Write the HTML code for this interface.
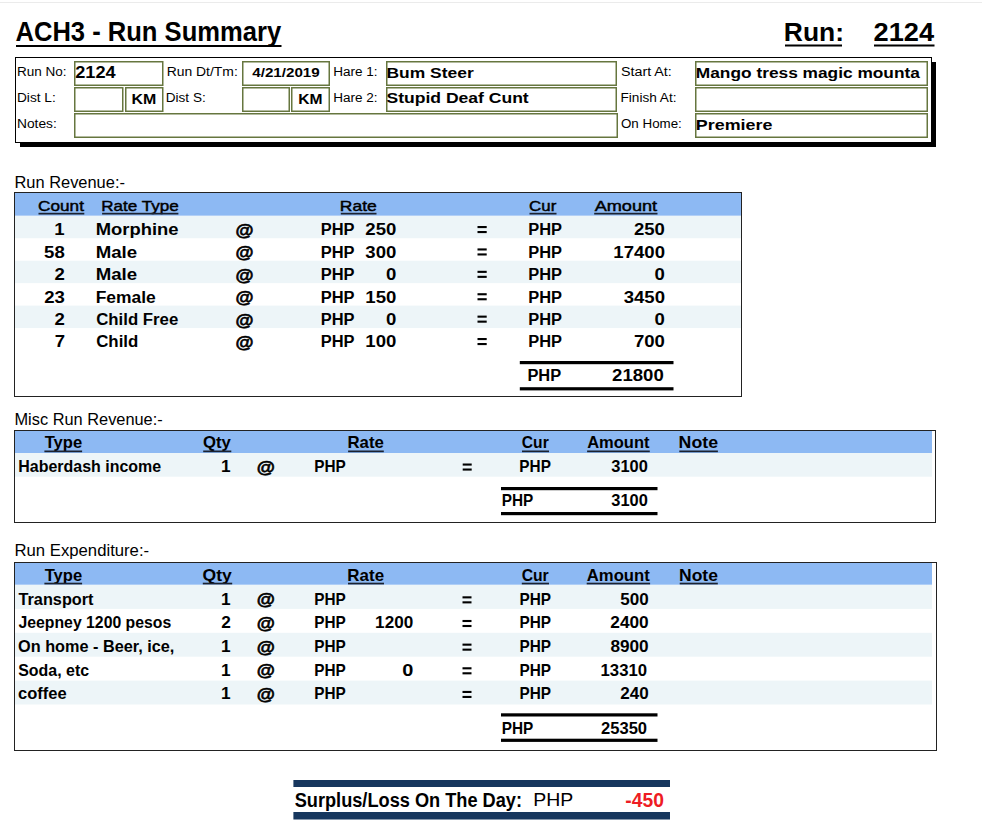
<!DOCTYPE html>
<html><head><meta charset="utf-8"><style>
html,body{margin:0;padding:0;background:#fff;}
svg{display:block;font-family:"Liberation Sans",sans-serif;}
</style></head><body>
<svg width="982" height="829" viewBox="0 0 982 829">
<rect x="0" y="0" width="982" height="829" fill="#fff"/>
<rect x="0.00" y="2.00" width="982.00" height="1.00" fill="#ebebeb"/>
<text x="15.46" y="40.50" font-size="27.33" font-weight="bold" fill="#000" textLength="265.67" lengthAdjust="spacingAndGlyphs">ACH3 - Run Summary</text>
<rect x="16.00" y="45.00" width="265.50" height="2.00" fill="#000"/>
<text x="783.83" y="40.50" font-size="26.60" font-weight="bold" fill="#000" textLength="60.21" lengthAdjust="spacingAndGlyphs">Run:</text>
<rect x="785.00" y="44.50" width="57.00" height="2.00" fill="#000"/>
<text x="873.56" y="40.50" font-size="26.60" font-weight="bold" fill="#000" textLength="60.59" lengthAdjust="spacingAndGlyphs">2124</text>
<rect x="874.00" y="44.50" width="60.50" height="2.00" fill="#000"/>
<rect x="15.50" y="57.50" width="916.00" height="85.00" fill="none" stroke="#000" stroke-width="1.00"/>
<rect x="932.00" y="62.00" width="4.00" height="85.00" fill="#000"/>
<rect x="20.00" y="143.00" width="916.00" height="4.00" fill="#000"/>
<rect x="74.75" y="61.75" width="88.00" height="23.50" fill="none" stroke="#66763f" stroke-width="1.50"/>
<rect x="242.75" y="61.75" width="86.50" height="23.50" fill="none" stroke="#66763f" stroke-width="1.50"/>
<rect x="386.75" y="61.75" width="229.50" height="23.50" fill="none" stroke="#66763f" stroke-width="1.50"/>
<rect x="695.75" y="61.75" width="231.50" height="23.50" fill="none" stroke="#66763f" stroke-width="1.50"/>
<rect x="74.75" y="87.75" width="48.00" height="23.50" fill="none" stroke="#66763f" stroke-width="1.50"/>
<rect x="125.75" y="87.75" width="37.00" height="23.50" fill="none" stroke="#66763f" stroke-width="1.50"/>
<rect x="242.75" y="87.75" width="46.50" height="23.50" fill="none" stroke="#66763f" stroke-width="1.50"/>
<rect x="291.75" y="87.75" width="37.50" height="23.50" fill="none" stroke="#66763f" stroke-width="1.50"/>
<rect x="386.75" y="87.75" width="229.50" height="23.50" fill="none" stroke="#66763f" stroke-width="1.50"/>
<rect x="695.75" y="87.75" width="231.50" height="23.50" fill="none" stroke="#66763f" stroke-width="1.50"/>
<rect x="74.75" y="113.75" width="542.50" height="23.50" fill="none" stroke="#66763f" stroke-width="1.50"/>
<rect x="695.75" y="113.75" width="231.50" height="23.50" fill="none" stroke="#66763f" stroke-width="1.50"/>
<text x="16.99" y="75.80" font-size="13.66" fill="#000" textLength="49.65" lengthAdjust="spacingAndGlyphs">Run No:</text>
<text x="16.98" y="101.60" font-size="13.66" fill="#000" textLength="38.77" lengthAdjust="spacingAndGlyphs">Dist L:</text>
<text x="16.97" y="127.70" font-size="13.66" fill="#000" textLength="39.79" lengthAdjust="spacingAndGlyphs">Notes:</text>
<text x="166.66" y="75.70" font-size="13.66" fill="#000" textLength="71.11" lengthAdjust="spacingAndGlyphs">Run Dt/Tm:</text>
<text x="165.79" y="101.70" font-size="13.66" fill="#000" textLength="39.95" lengthAdjust="spacingAndGlyphs">Dist S:</text>
<text x="333.19" y="75.60" font-size="13.66" fill="#000" textLength="44.34" lengthAdjust="spacingAndGlyphs">Hare 1:</text>
<text x="333.19" y="101.70" font-size="13.66" fill="#000" textLength="44.34" lengthAdjust="spacingAndGlyphs">Hare 2:</text>
<text x="620.96" y="75.50" font-size="13.66" fill="#000" textLength="50.82" lengthAdjust="spacingAndGlyphs">Start At:</text>
<text x="620.50" y="101.70" font-size="13.66" fill="#000" textLength="56.03" lengthAdjust="spacingAndGlyphs">Finish At:</text>
<text x="620.97" y="127.60" font-size="13.66" fill="#000" textLength="60.85" lengthAdjust="spacingAndGlyphs">On Home:</text>
<text x="75.27" y="78.00" font-size="15.70" font-weight="bold" fill="#000" textLength="40.43" lengthAdjust="spacingAndGlyphs">2124</text>
<text x="131.64" y="103.90" font-size="15.12" font-weight="bold" fill="#000" textLength="24.73" lengthAdjust="spacingAndGlyphs">KM</text>
<text x="252.27" y="76.70" font-size="13.66" font-weight="bold" fill="#000" textLength="67.49" lengthAdjust="spacingAndGlyphs">4/21/2019</text>
<text x="298.16" y="103.90" font-size="15.12" font-weight="bold" fill="#000" textLength="24.29" lengthAdjust="spacingAndGlyphs">KM</text>
<text x="386.53" y="77.80" font-size="15.41" font-weight="bold" fill="#000" textLength="87.23" lengthAdjust="spacingAndGlyphs">Bum Steer</text>
<text x="386.49" y="102.90" font-size="15.41" font-weight="bold" fill="#000" textLength="142.22" lengthAdjust="spacingAndGlyphs">Stupid Deaf Cunt</text>
<text x="695.84" y="78.00" font-size="15.26" font-weight="bold" fill="#000" textLength="224.05" lengthAdjust="spacingAndGlyphs">Mango tress magic mounta</text>
<text x="695.80" y="130.40" font-size="15.26" font-weight="bold" fill="#000" textLength="76.61" lengthAdjust="spacingAndGlyphs">Premiere</text>
<text x="14.45" y="188.00" font-size="15.70" fill="#000" textLength="110.48" lengthAdjust="spacingAndGlyphs">Run Revenue:-</text>
<text x="14.46" y="424.80" font-size="15.99" fill="#000" textLength="148.27" lengthAdjust="spacingAndGlyphs">Misc Run Revenue:-</text>
<text x="14.53" y="555.80" font-size="15.70" fill="#000" textLength="134.61" lengthAdjust="spacingAndGlyphs">Run Expenditure:-</text>
<rect x="14.00" y="192.00" width="728.00" height="205.00" fill="#222"/>
<rect x="15.00" y="193.00" width="726.00" height="203.00" fill="#fff"/>
<rect x="15.00" y="193.00" width="726.00" height="22.80" fill="#8db9f3"/>
<rect x="15.00" y="215.80" width="726.00" height="22.45" fill="#edf5f8"/>
<rect x="15.00" y="260.70" width="726.00" height="22.45" fill="#edf5f8"/>
<rect x="15.00" y="305.60" width="726.00" height="22.45" fill="#edf5f8"/>
<text x="38.13" y="210.60" font-size="14.97" fill="#000" stroke="#000" stroke-width="0.45" textLength="45.80" lengthAdjust="spacingAndGlyphs">Count</text>
<rect x="38.50" y="212.80" width="45.80" height="1.70" fill="#1b2230"/>
<text x="101.22" y="210.60" font-size="14.97" fill="#000" stroke="#000" stroke-width="0.45" textLength="77.42" lengthAdjust="spacingAndGlyphs">Rate Type</text>
<rect x="102.10" y="212.80" width="76.30" height="1.70" fill="#1b2230"/>
<text x="339.87" y="210.60" font-size="14.97" fill="#000" stroke="#000" stroke-width="0.45" textLength="36.91" lengthAdjust="spacingAndGlyphs">Rate</text>
<rect x="340.80" y="212.80" width="35.70" height="1.70" fill="#1b2230"/>
<text x="529.14" y="210.60" font-size="14.97" fill="#000" stroke="#000" stroke-width="0.45" textLength="27.13" lengthAdjust="spacingAndGlyphs">Cur</text>
<rect x="529.50" y="212.80" width="27.00" height="1.70" fill="#1b2230"/>
<text x="594.66" y="210.60" font-size="14.97" fill="#000" stroke="#000" stroke-width="0.45" textLength="62.47" lengthAdjust="spacingAndGlyphs">Amount</text>
<rect x="594.20" y="212.80" width="63.30" height="1.70" fill="#1b2230"/>
<text x="54.39" y="235.40" font-size="16.42" font-weight="bold" fill="#000" textLength="10.33" lengthAdjust="spacingAndGlyphs">1</text>
<text x="95.67" y="235.40" font-size="16.42" font-weight="bold" fill="#000" textLength="82.86" lengthAdjust="spacingAndGlyphs">Morphine</text>
<text x="235.44" y="235.90" font-size="17.25" font-weight="bold" fill="#000" stroke="#000" stroke-width="0.60" textLength="18.03" lengthAdjust="spacingAndGlyphs">@</text>
<text x="320.70" y="235.40" font-size="16.42" font-weight="bold" fill="#000" textLength="33.76" lengthAdjust="spacingAndGlyphs">PHP</text>
<text x="365.38" y="235.40" font-size="16.42" font-weight="bold" fill="#000" textLength="30.98" lengthAdjust="spacingAndGlyphs">250</text>
<rect x="477.50" y="226.00" width="9.20" height="2.10" fill="#000"/>
<rect x="477.50" y="231.00" width="9.20" height="2.10" fill="#000"/>
<text x="528.30" y="235.40" font-size="16.42" font-weight="bold" fill="#000" textLength="33.76" lengthAdjust="spacingAndGlyphs">PHP</text>
<text x="633.98" y="235.40" font-size="16.42" font-weight="bold" fill="#000" textLength="30.98" lengthAdjust="spacingAndGlyphs">250</text>
<text x="44.12" y="257.80" font-size="16.42" font-weight="bold" fill="#000" textLength="20.65" lengthAdjust="spacingAndGlyphs">58</text>
<text x="95.65" y="257.80" font-size="16.42" font-weight="bold" fill="#000" textLength="41.49" lengthAdjust="spacingAndGlyphs">Male</text>
<text x="235.44" y="258.30" font-size="17.25" font-weight="bold" fill="#000" stroke="#000" stroke-width="0.60" textLength="18.03" lengthAdjust="spacingAndGlyphs">@</text>
<text x="320.70" y="257.80" font-size="16.42" font-weight="bold" fill="#000" textLength="33.76" lengthAdjust="spacingAndGlyphs">PHP</text>
<text x="365.38" y="257.80" font-size="16.42" font-weight="bold" fill="#000" textLength="30.98" lengthAdjust="spacingAndGlyphs">300</text>
<rect x="477.50" y="248.40" width="9.20" height="2.10" fill="#000"/>
<rect x="477.50" y="253.40" width="9.20" height="2.10" fill="#000"/>
<text x="528.30" y="257.80" font-size="16.42" font-weight="bold" fill="#000" textLength="33.76" lengthAdjust="spacingAndGlyphs">PHP</text>
<text x="613.33" y="257.80" font-size="16.42" font-weight="bold" fill="#000" textLength="51.63" lengthAdjust="spacingAndGlyphs">17400</text>
<text x="54.62" y="280.20" font-size="16.42" font-weight="bold" fill="#000" textLength="10.33" lengthAdjust="spacingAndGlyphs">2</text>
<text x="95.65" y="280.20" font-size="16.42" font-weight="bold" fill="#000" textLength="41.49" lengthAdjust="spacingAndGlyphs">Male</text>
<text x="235.44" y="280.70" font-size="17.25" font-weight="bold" fill="#000" stroke="#000" stroke-width="0.60" textLength="18.03" lengthAdjust="spacingAndGlyphs">@</text>
<text x="320.70" y="280.20" font-size="16.42" font-weight="bold" fill="#000" textLength="33.76" lengthAdjust="spacingAndGlyphs">PHP</text>
<text x="386.04" y="280.20" font-size="16.42" font-weight="bold" fill="#000" textLength="10.33" lengthAdjust="spacingAndGlyphs">0</text>
<rect x="477.50" y="270.80" width="9.20" height="2.10" fill="#000"/>
<rect x="477.50" y="275.80" width="9.20" height="2.10" fill="#000"/>
<text x="528.30" y="280.20" font-size="16.42" font-weight="bold" fill="#000" textLength="33.76" lengthAdjust="spacingAndGlyphs">PHP</text>
<text x="654.64" y="280.20" font-size="16.42" font-weight="bold" fill="#000" textLength="10.33" lengthAdjust="spacingAndGlyphs">0</text>
<text x="44.22" y="302.60" font-size="16.42" font-weight="bold" fill="#000" textLength="20.65" lengthAdjust="spacingAndGlyphs">23</text>
<text x="95.73" y="302.60" font-size="16.42" font-weight="bold" fill="#000" textLength="60.06" lengthAdjust="spacingAndGlyphs">Female</text>
<text x="235.44" y="303.10" font-size="17.25" font-weight="bold" fill="#000" stroke="#000" stroke-width="0.60" textLength="18.03" lengthAdjust="spacingAndGlyphs">@</text>
<text x="320.70" y="302.60" font-size="16.42" font-weight="bold" fill="#000" textLength="33.76" lengthAdjust="spacingAndGlyphs">PHP</text>
<text x="365.38" y="302.60" font-size="16.42" font-weight="bold" fill="#000" textLength="30.98" lengthAdjust="spacingAndGlyphs">150</text>
<rect x="477.50" y="293.20" width="9.20" height="2.10" fill="#000"/>
<rect x="477.50" y="298.20" width="9.20" height="2.10" fill="#000"/>
<text x="528.30" y="302.60" font-size="16.42" font-weight="bold" fill="#000" textLength="33.76" lengthAdjust="spacingAndGlyphs">PHP</text>
<text x="623.66" y="302.60" font-size="16.42" font-weight="bold" fill="#000" textLength="41.30" lengthAdjust="spacingAndGlyphs">3450</text>
<text x="54.62" y="325.00" font-size="16.42" font-weight="bold" fill="#000" textLength="10.33" lengthAdjust="spacingAndGlyphs">2</text>
<text x="96.21" y="325.00" font-size="16.42" font-weight="bold" fill="#000" textLength="82.06" lengthAdjust="spacingAndGlyphs">Child Free</text>
<text x="235.44" y="325.50" font-size="17.25" font-weight="bold" fill="#000" stroke="#000" stroke-width="0.60" textLength="18.03" lengthAdjust="spacingAndGlyphs">@</text>
<text x="320.70" y="325.00" font-size="16.42" font-weight="bold" fill="#000" textLength="33.76" lengthAdjust="spacingAndGlyphs">PHP</text>
<text x="386.04" y="325.00" font-size="16.42" font-weight="bold" fill="#000" textLength="10.33" lengthAdjust="spacingAndGlyphs">0</text>
<rect x="477.50" y="315.60" width="9.20" height="2.10" fill="#000"/>
<rect x="477.50" y="320.60" width="9.20" height="2.10" fill="#000"/>
<text x="528.30" y="325.00" font-size="16.42" font-weight="bold" fill="#000" textLength="33.76" lengthAdjust="spacingAndGlyphs">PHP</text>
<text x="654.64" y="325.00" font-size="16.42" font-weight="bold" fill="#000" textLength="10.33" lengthAdjust="spacingAndGlyphs">0</text>
<text x="54.69" y="347.40" font-size="16.42" font-weight="bold" fill="#000" textLength="10.33" lengthAdjust="spacingAndGlyphs">7</text>
<text x="96.21" y="347.40" font-size="16.42" font-weight="bold" fill="#000" textLength="42.10" lengthAdjust="spacingAndGlyphs">Child</text>
<text x="235.44" y="347.90" font-size="17.25" font-weight="bold" fill="#000" stroke="#000" stroke-width="0.60" textLength="18.03" lengthAdjust="spacingAndGlyphs">@</text>
<text x="320.70" y="347.40" font-size="16.42" font-weight="bold" fill="#000" textLength="33.76" lengthAdjust="spacingAndGlyphs">PHP</text>
<text x="365.38" y="347.40" font-size="16.42" font-weight="bold" fill="#000" textLength="30.98" lengthAdjust="spacingAndGlyphs">100</text>
<rect x="477.50" y="338.00" width="9.20" height="2.10" fill="#000"/>
<rect x="477.50" y="343.00" width="9.20" height="2.10" fill="#000"/>
<text x="528.30" y="347.40" font-size="16.42" font-weight="bold" fill="#000" textLength="33.76" lengthAdjust="spacingAndGlyphs">PHP</text>
<text x="633.98" y="347.40" font-size="16.42" font-weight="bold" fill="#000" textLength="30.98" lengthAdjust="spacingAndGlyphs">700</text>
<rect x="519.80" y="361.00" width="153.70" height="3.20" fill="#000"/>
<rect x="519.80" y="387.20" width="153.70" height="3.20" fill="#000"/>
<text x="527.40" y="381.00" font-size="16.42" font-weight="bold" fill="#000" textLength="33.76" lengthAdjust="spacingAndGlyphs">PHP</text>
<text x="612.13" y="381.00" font-size="16.42" font-weight="bold" fill="#000" textLength="51.63" lengthAdjust="spacingAndGlyphs">21800</text>
<rect x="14.00" y="430.00" width="922.00" height="93.00" fill="#222"/>
<rect x="15.00" y="431.00" width="920.00" height="91.00" fill="#fff"/>
<rect x="15.00" y="431.00" width="917.00" height="22.00" fill="#8db9f3"/>
<rect x="15.00" y="453.00" width="917.00" height="23.70" fill="#edf5f8"/>
<text x="44.72" y="448.30" font-size="15.70" font-weight="bold" fill="#000" textLength="37.43" lengthAdjust="spacingAndGlyphs">Type</text>
<rect x="44.40" y="450.50" width="37.70" height="1.70" fill="#1b2230"/>
<text x="203.01" y="448.30" font-size="15.70" font-weight="bold" fill="#000" textLength="27.88" lengthAdjust="spacingAndGlyphs">Qty</text>
<rect x="203.20" y="450.50" width="28.10" height="1.70" fill="#1b2230"/>
<text x="347.48" y="448.30" font-size="15.70" font-weight="bold" fill="#000" textLength="36.40" lengthAdjust="spacingAndGlyphs">Rate</text>
<rect x="348.10" y="450.50" width="35.70" height="1.70" fill="#1b2230"/>
<text x="521.86" y="448.30" font-size="15.70" font-weight="bold" fill="#000" textLength="26.88" lengthAdjust="spacingAndGlyphs">Cur</text>
<rect x="522.00" y="450.50" width="27.00" height="1.70" fill="#1b2230"/>
<text x="587.19" y="448.30" font-size="15.70" font-weight="bold" fill="#000" textLength="62.31" lengthAdjust="spacingAndGlyphs">Amount</text>
<rect x="587.10" y="450.50" width="62.70" height="1.70" fill="#1b2230"/>
<text x="678.61" y="448.30" font-size="15.70" font-weight="bold" fill="#000" textLength="39.39" lengthAdjust="spacingAndGlyphs">Note</text>
<rect x="679.30" y="450.50" width="38.60" height="1.70" fill="#1b2230"/>
<text x="18.23" y="471.80" font-size="15.70" font-weight="bold" fill="#000" textLength="142.91" lengthAdjust="spacingAndGlyphs">Haberdash income</text>
<text x="220.98" y="471.80" font-size="15.70" font-weight="bold" fill="#000" textLength="9.60" lengthAdjust="spacingAndGlyphs">1</text>
<text x="256.84" y="472.60" font-size="17.27" font-weight="bold" fill="#000" stroke="#000" stroke-width="0.60" textLength="18.14" lengthAdjust="spacingAndGlyphs">@</text>
<text x="314.27" y="471.80" font-size="15.70" font-weight="bold" fill="#000" textLength="31.55" lengthAdjust="spacingAndGlyphs">PHP</text>
<rect x="462.70" y="463.50" width="9.00" height="2.10" fill="#000"/>
<rect x="462.70" y="468.50" width="9.00" height="2.10" fill="#000"/>
<text x="519.37" y="471.80" font-size="15.70" font-weight="bold" fill="#000" textLength="31.55" lengthAdjust="spacingAndGlyphs">PHP</text>
<text x="611.32" y="471.80" font-size="15.70" font-weight="bold" fill="#000" textLength="36.55" lengthAdjust="spacingAndGlyphs">3100</text>
<rect x="501.00" y="487.00" width="156.50" height="3.20" fill="#000"/>
<rect x="501.00" y="512.00" width="156.50" height="3.20" fill="#000"/>
<text x="501.67" y="506.40" font-size="15.70" font-weight="bold" fill="#000" textLength="31.55" lengthAdjust="spacingAndGlyphs">PHP</text>
<text x="611.32" y="506.40" font-size="15.70" font-weight="bold" fill="#000" textLength="36.55" lengthAdjust="spacingAndGlyphs">3100</text>
<rect x="14.00" y="562.00" width="923.00" height="189.00" fill="#222"/>
<rect x="15.00" y="563.00" width="921.00" height="187.00" fill="#fff"/>
<rect x="15.00" y="563.00" width="917.00" height="21.70" fill="#8db9f3"/>
<rect x="15.00" y="585.00" width="917.00" height="23.90" fill="#edf5f8"/>
<rect x="15.00" y="632.80" width="917.00" height="23.90" fill="#edf5f8"/>
<rect x="15.00" y="680.60" width="917.00" height="23.90" fill="#edf5f8"/>
<text x="44.72" y="580.50" font-size="15.70" font-weight="bold" fill="#000" textLength="37.43" lengthAdjust="spacingAndGlyphs">Type</text>
<rect x="44.40" y="582.70" width="37.70" height="1.70" fill="#1b2230"/>
<text x="202.58" y="580.50" font-size="15.70" font-weight="bold" fill="#000" textLength="29.21" lengthAdjust="spacingAndGlyphs">Qty</text>
<rect x="202.80" y="582.70" width="29.40" height="1.70" fill="#1b2230"/>
<text x="347.37" y="580.50" font-size="15.70" font-weight="bold" fill="#000" textLength="36.71" lengthAdjust="spacingAndGlyphs">Rate</text>
<rect x="348.00" y="582.70" width="36.00" height="1.70" fill="#1b2230"/>
<text x="521.65" y="580.50" font-size="15.70" font-weight="bold" fill="#000" textLength="27.08" lengthAdjust="spacingAndGlyphs">Cur</text>
<rect x="521.80" y="582.70" width="27.20" height="1.70" fill="#1b2230"/>
<text x="586.78" y="580.50" font-size="15.70" font-weight="bold" fill="#000" textLength="63.02" lengthAdjust="spacingAndGlyphs">Amount</text>
<rect x="586.70" y="582.70" width="63.40" height="1.70" fill="#1b2230"/>
<text x="679.03" y="580.50" font-size="15.70" font-weight="bold" fill="#000" textLength="38.87" lengthAdjust="spacingAndGlyphs">Note</text>
<rect x="679.70" y="582.70" width="38.10" height="1.70" fill="#1b2230"/>
<text x="18.52" y="604.60" font-size="15.70" font-weight="bold" fill="#000" textLength="74.98" lengthAdjust="spacingAndGlyphs">Transport</text>
<text x="221.08" y="604.60" font-size="15.70" font-weight="bold" fill="#000" textLength="9.60" lengthAdjust="spacingAndGlyphs">1</text>
<text x="256.84" y="605.40" font-size="17.27" font-weight="bold" fill="#000" stroke="#000" stroke-width="0.60" textLength="18.14" lengthAdjust="spacingAndGlyphs">@</text>
<text x="314.27" y="604.60" font-size="15.70" font-weight="bold" fill="#000" textLength="31.55" lengthAdjust="spacingAndGlyphs">PHP</text>
<rect x="462.50" y="596.30" width="9.00" height="2.10" fill="#000"/>
<rect x="462.50" y="601.30" width="9.00" height="2.10" fill="#000"/>
<text x="519.47" y="604.60" font-size="15.70" font-weight="bold" fill="#000" textLength="31.55" lengthAdjust="spacingAndGlyphs">PHP</text>
<text x="620.28" y="604.60" font-size="15.70" font-weight="bold" fill="#000" textLength="28.42" lengthAdjust="spacingAndGlyphs">500</text>
<text x="18.46" y="628.25" font-size="15.70" font-weight="bold" fill="#000" textLength="152.79" lengthAdjust="spacingAndGlyphs">Jeepney 1200 pesos</text>
<text x="221.29" y="628.25" font-size="15.70" font-weight="bold" fill="#000" textLength="9.60" lengthAdjust="spacingAndGlyphs">2</text>
<text x="256.84" y="629.05" font-size="17.27" font-weight="bold" fill="#000" stroke="#000" stroke-width="0.60" textLength="18.14" lengthAdjust="spacingAndGlyphs">@</text>
<text x="314.27" y="628.25" font-size="15.70" font-weight="bold" fill="#000" textLength="31.55" lengthAdjust="spacingAndGlyphs">PHP</text>
<text x="375.12" y="628.25" font-size="15.70" font-weight="bold" fill="#000" textLength="38.08" lengthAdjust="spacingAndGlyphs">1200</text>
<rect x="462.50" y="619.95" width="9.00" height="2.10" fill="#000"/>
<rect x="462.50" y="624.95" width="9.00" height="2.10" fill="#000"/>
<text x="519.47" y="628.25" font-size="15.70" font-weight="bold" fill="#000" textLength="31.55" lengthAdjust="spacingAndGlyphs">PHP</text>
<text x="610.30" y="628.25" font-size="15.70" font-weight="bold" fill="#000" textLength="38.41" lengthAdjust="spacingAndGlyphs">2400</text>
<text x="18.04" y="651.90" font-size="15.70" font-weight="bold" fill="#000" textLength="156.34" lengthAdjust="spacingAndGlyphs">On home - Beer, ice,</text>
<text x="221.08" y="651.90" font-size="15.70" font-weight="bold" fill="#000" textLength="9.60" lengthAdjust="spacingAndGlyphs">1</text>
<text x="256.84" y="652.70" font-size="17.27" font-weight="bold" fill="#000" stroke="#000" stroke-width="0.60" textLength="18.14" lengthAdjust="spacingAndGlyphs">@</text>
<text x="314.27" y="651.90" font-size="15.70" font-weight="bold" fill="#000" textLength="31.55" lengthAdjust="spacingAndGlyphs">PHP</text>
<rect x="462.50" y="643.60" width="9.00" height="2.10" fill="#000"/>
<rect x="462.50" y="648.60" width="9.00" height="2.10" fill="#000"/>
<text x="519.47" y="651.90" font-size="15.70" font-weight="bold" fill="#000" textLength="31.55" lengthAdjust="spacingAndGlyphs">PHP</text>
<text x="610.45" y="651.90" font-size="15.70" font-weight="bold" fill="#000" textLength="38.25" lengthAdjust="spacingAndGlyphs">8900</text>
<text x="18.24" y="675.55" font-size="15.70" font-weight="bold" fill="#000" textLength="70.83" lengthAdjust="spacingAndGlyphs">Soda, etc</text>
<text x="221.08" y="675.55" font-size="15.70" font-weight="bold" fill="#000" textLength="9.60" lengthAdjust="spacingAndGlyphs">1</text>
<text x="256.84" y="676.35" font-size="17.27" font-weight="bold" fill="#000" stroke="#000" stroke-width="0.60" textLength="18.14" lengthAdjust="spacingAndGlyphs">@</text>
<text x="314.27" y="675.55" font-size="15.70" font-weight="bold" fill="#000" textLength="31.55" lengthAdjust="spacingAndGlyphs">PHP</text>
<text x="402.21" y="675.55" font-size="15.70" font-weight="bold" fill="#000" textLength="11.11" lengthAdjust="spacingAndGlyphs">0</text>
<rect x="462.50" y="667.25" width="9.00" height="2.10" fill="#000"/>
<rect x="462.50" y="672.25" width="9.00" height="2.10" fill="#000"/>
<text x="519.47" y="675.55" font-size="15.70" font-weight="bold" fill="#000" textLength="31.55" lengthAdjust="spacingAndGlyphs">PHP</text>
<text x="600.55" y="675.55" font-size="15.70" font-weight="bold" fill="#000" textLength="46.54" lengthAdjust="spacingAndGlyphs">13310</text>
<text x="18.06" y="699.20" font-size="15.70" font-weight="bold" fill="#000" textLength="48.61" lengthAdjust="spacingAndGlyphs">coffee</text>
<text x="221.08" y="699.20" font-size="15.70" font-weight="bold" fill="#000" textLength="9.60" lengthAdjust="spacingAndGlyphs">1</text>
<text x="256.84" y="700.00" font-size="17.27" font-weight="bold" fill="#000" stroke="#000" stroke-width="0.60" textLength="18.14" lengthAdjust="spacingAndGlyphs">@</text>
<text x="314.27" y="699.20" font-size="15.70" font-weight="bold" fill="#000" textLength="31.55" lengthAdjust="spacingAndGlyphs">PHP</text>
<rect x="462.50" y="690.90" width="9.00" height="2.10" fill="#000"/>
<rect x="462.50" y="695.90" width="9.00" height="2.10" fill="#000"/>
<text x="519.47" y="699.20" font-size="15.70" font-weight="bold" fill="#000" textLength="31.55" lengthAdjust="spacingAndGlyphs">PHP</text>
<text x="620.21" y="699.20" font-size="15.70" font-weight="bold" fill="#000" textLength="28.49" lengthAdjust="spacingAndGlyphs">240</text>
<rect x="501.00" y="713.30" width="156.50" height="3.20" fill="#000"/>
<rect x="501.00" y="738.70" width="156.50" height="3.20" fill="#000"/>
<text x="501.67" y="734.30" font-size="15.70" font-weight="bold" fill="#000" textLength="31.55" lengthAdjust="spacingAndGlyphs">PHP</text>
<text x="601.03" y="734.30" font-size="15.70" font-weight="bold" fill="#000" textLength="46.05" lengthAdjust="spacingAndGlyphs">25350</text>
<rect x="293.40" y="780.00" width="376.60" height="7.00" fill="#17375e"/>
<rect x="293.40" y="812.00" width="376.60" height="7.50" fill="#17375e"/>
<text x="294.68" y="807.10" font-size="19.48" font-weight="bold" fill="#000" textLength="227.37" lengthAdjust="spacingAndGlyphs">Surplus/Loss On The Day:</text>
<text x="533.30" y="806.00" font-size="18.90" fill="#000" textLength="40.02" lengthAdjust="spacingAndGlyphs">PHP</text>
<text x="625.35" y="807.00" font-size="19.77" font-weight="bold" fill="#ee1c24" textLength="38.54" lengthAdjust="spacingAndGlyphs">-450</text>
</svg>
</body></html>
